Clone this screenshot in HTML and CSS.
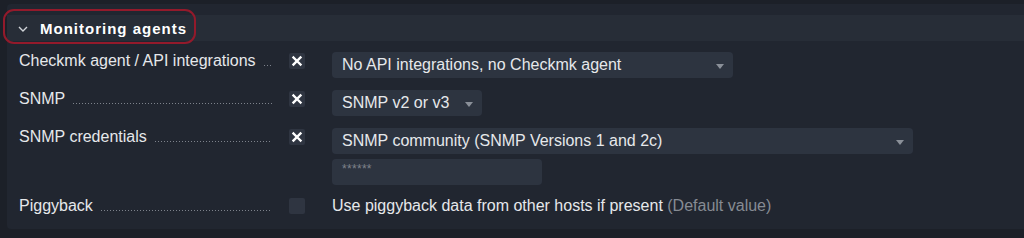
FILE: index.html
```html
<!DOCTYPE html>
<html lang="en">
<head>
<meta charset="utf-8">
<title>Monitoring agents</title>
<link rel="stylesheet" href="styles.css">
</head>
<body>
<div class="card">
  <div class="header">
    <svg class="chevron" width="10" height="6" viewBox="0 0 10 6"><path d="M1 1 L5 5 L9 1" fill="none" stroke="#d0d3d8" stroke-width="1.4"/></svg>
    <span class="title">Monitoring agents</span>
    <span class="ring"></span>
  </div>
  <div class="rows">
    <div class="label"><span class="ltext">Checkmk agent / API integrations</span><span class="dots"></span></div>
    <div class="cb"><svg width="16" height="16" viewBox="0 0 16 16"><path d="M4.5 4.5 L11.5 11.5 M11.5 4.5 L4.5 11.5" stroke="#fff" stroke-width="2.4" stroke-linecap="square"/></svg></div>
    <div class="value"><div class="select w401"><span>No API integrations, no Checkmk agent</span><i class="arrow"></i></div></div>

    <div class="label"><span class="ltext">SNMP</span><span class="dots"></span></div>
    <div class="cb"><svg width="16" height="16" viewBox="0 0 16 16"><path d="M4.5 4.5 L11.5 11.5 M11.5 4.5 L4.5 11.5" stroke="#fff" stroke-width="2.4" stroke-linecap="square"/></svg></div>
    <div class="value"><div class="select w150"><span>SNMP v2 or v3</span><i class="arrow"></i></div></div>

    <div class="label"><span class="ltext">SNMP credentials</span><span class="dots"></span></div>
    <div class="cb"><svg width="16" height="16" viewBox="0 0 16 16"><path d="M4.5 4.5 L11.5 11.5 M11.5 4.5 L4.5 11.5" stroke="#fff" stroke-width="2.4" stroke-linecap="square"/></svg></div>
    <div class="value stack">
      <div class="select w581"><span>SNMP community (SNMP Versions 1 and 2c)</span><i class="arrow"></i></div>
      <div class="password"><span>******</span></div>
    </div>

    <div class="label"><span class="ltext">Piggyback</span><span class="dots"></span></div>
    <div class="cb empty"></div>
    <div class="value plain">Use piggyback data from other hosts if present <span class="muted">(Default value)</span></div>
  </div>
</div>
</body>
</html>
```

FILE: styles.css
```css
html, body {
  margin: 0;
  padding: 0;
  background: #1c2028;
  font-family: "Liberation Sans", Arial, sans-serif;
  font-size: 16px;
  color: #e6e8eb;
}

.card {
  margin: 4px 0 0 7px;
  height: 225px;
  background: #212630;
  border-radius: 4px 0 0 4px;
  padding-top: 11px;
  box-sizing: border-box;
}

.header {
  position: relative;
  height: 26px;
  background: #272d37;
  display: flex;
  align-items: center;
  padding-left: 11px;
}

.chevron {
  margin-right: 12px;
  margin-top: 1px;
}

.title {
  font-size: 15px;
  font-weight: bold;
  letter-spacing: 1px;
  color: #ffffff;
}

.ring {
  position: absolute;
  left: -4px;
  top: -6px;
  width: 193px;
  height: 35px;
  border: 2.5px solid #931a2b;
  border-radius: 11px;
  box-sizing: border-box;
}

.rows {
  display: grid;
  grid-template-columns: 253px 33px 1fr;
  row-gap: 12px;
  padding: 11px 0 0 12px;
  align-items: start;
}

.label {
  display: flex;
  align-items: baseline;
  height: 26px;
  line-height: 17px;
  white-space: nowrap;
  overflow: hidden;
}

.ltext {
  flex: none;
}

.dots {
  flex: 1;
  height: 1px;
  margin-left: 8px;
  background-image: linear-gradient(to right, #7d828b 1px, transparent 1px);
  background-size: 3px 1px;
  background-repeat: repeat-x;
}

.cb {
  width: 16px;
  height: 16px;
  margin: 1px 0 0 17px;
  background: #2f3541;
  border-radius: 2px;
}

.cb svg {
  display: block;
}

.value {
  margin-left: 27px;
}

.value.stack {
  display: flex;
  flex-direction: column;
  gap: 5px;
}

.select {
  height: 26px;
  background: #2d3440;
  border-radius: 4px;
  display: flex;
  align-items: center;
  justify-content: space-between;
  padding: 0 9px 0 10px;
  box-sizing: border-box;
  white-space: nowrap;
}

.w401 { width: 401px; }
.w150 { width: 150px; }
.w581 { width: 581px; }

.arrow {
  width: 0;
  height: 0;
  border-left: 4.5px solid transparent;
  border-right: 4.5px solid transparent;
  border-top: 5px solid #8a9099;
  margin-top: 3px;
}

.password {
  width: 210px;
  height: 26px;
  background: #2d3440;
  border-radius: 4px;
  box-sizing: border-box;
  padding: 4px 0 0 10px;
  font-size: 12px;
  line-height: 12px;
  color: #7d828b;
  letter-spacing: 0.3px;
}

.value.plain {
  line-height: 17px;
  white-space: nowrap;
}

.muted {
  color: #868b93;
}
```
